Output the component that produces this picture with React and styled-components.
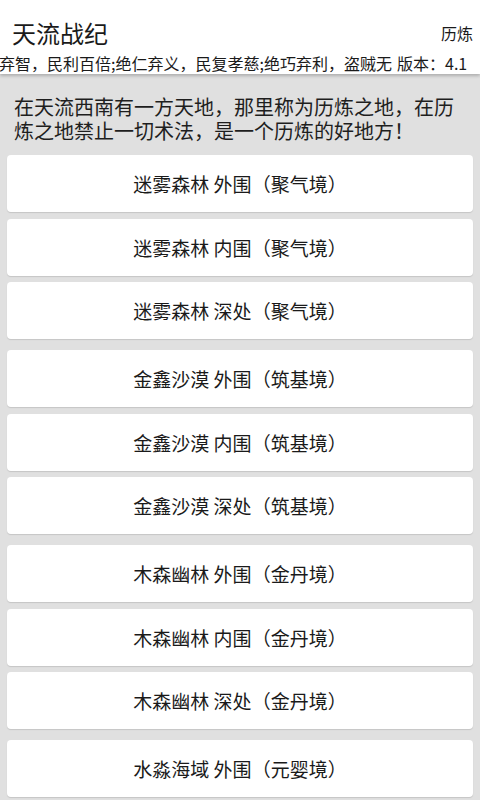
import React from "react";
import styled, { createGlobalStyle } from "styled-components";

const GlobalStyle = createGlobalStyle`
  html,
  body {
    margin: 0;
    padding: 0;
    background-color: #e0e0e0;
  }

  body {
    font-family: "Noto Sans CJK SC", "Noto Sans", "Liberation Sans", sans-serif;
    color: #1c1c1c;
  }
`;

const Page = styled.div`
  width: 480px;
  height: 800px;
  overflow: hidden;
  display: flex;
  flex-direction: column;
  background-color: #e0e0e0;
`;

const Header = styled.header`
  position: relative;
  z-index: 1;
  height: 81px;
  display: flex;
  flex-direction: column;
  padding-top: 18px;
  box-sizing: border-box;
  background-color: #fff;
  box-shadow: 0 2px 3px rgba(0, 0, 0, 0.22);
`;

const TitleRow = styled.div`
  display: flex;
  align-items: center;
  justify-content: space-between;
  height: 30px;
  padding: 0 7px 0 12px;
`;

const Title = styled.h1`
  margin: 0;
  font-size: 24px;
  font-weight: 400;
  line-height: 30px;
  color: #1a1a1a;
`;

const MenuLink = styled.span`
  font-size: 16px;
  line-height: 30px;
  color: #1a1a1a;
`;

const InfoRow = styled.div`
  display: flex;
  align-items: center;
  height: 22px;
  margin-top: 4px;
  font-size: 16px;
  line-height: 22px;
  color: #1a1a1a;
`;

// scrolling text, frozen at the frame shown in the screenshot
const Marquee = styled.div`
  flex: none;
  width: 392px;
  overflow: hidden;
  white-space: nowrap;
  text-indent: ${(props) => props.offset}px;
`;

const Version = styled.span`
  flex-shrink: 0;
  margin-left: 5px;
  white-space: nowrap;
`;

const Intro = styled.p`
  margin: 0;
  padding: 21px 14px 0;
  font-size: 20px;
  line-height: 24px;
  color: #1e1e1e;
`;

const List = styled.div`
  display: flex;
  flex-direction: column;
  gap: 11px;
  padding: 12px 7px 0;
`;

const Group = styled.div`
  display: flex;
  flex-direction: column;
  gap: 6.5px;
`;

const PlaceButton = styled.button`
  height: 57px;
  flex-shrink: 0;
  display: flex;
  align-items: center;
  justify-content: center;
  border: none;
  border-radius: 4px;
  background-color: #fff;
  box-shadow: 0 1px 1px rgba(0, 0, 0, 0.12);
  font-family: inherit;
  font-size: 19px;
  color: #1a1a1a;
  cursor: pointer;
`;

const regions = [
  { name: "迷雾森林", realm: "聚气境" },
  { name: "金鑫沙漠", realm: "筑基境" },
  { name: "木森幽林", realm: "金丹境" },
  { name: "水淼海域", realm: "元婴境" },
];

const zones = ["外围", "内围", "深处"];

function App() {
  return (
    <Page>
      <GlobalStyle />
      <Header>
        <TitleRow>
          <Title>天流战纪</Title>
          <MenuLink>历炼</MenuLink>
        </TitleRow>
        <InfoRow>
          <Marquee offset={-33}>
            绝圣弃智，民利百倍;绝仁弃义，民复孝慈;绝巧弃利，盗贼无有
          </Marquee>
          <Version>版本：4.1</Version>
        </InfoRow>
      </Header>
      <Intro>
        在天流西南有一方天地，那里称为历炼之地，在历炼之地禁止一切术法，是一个历炼的好地方！
      </Intro>
      <List>
        {regions.map((region) => (
          <Group key={region.name}>
            {zones.map((zone) => (
              <PlaceButton key={zone}>
                {region.name} {zone}（{region.realm}）
              </PlaceButton>
            ))}
          </Group>
        ))}
      </List>
    </Page>
  );
}

export default App;
